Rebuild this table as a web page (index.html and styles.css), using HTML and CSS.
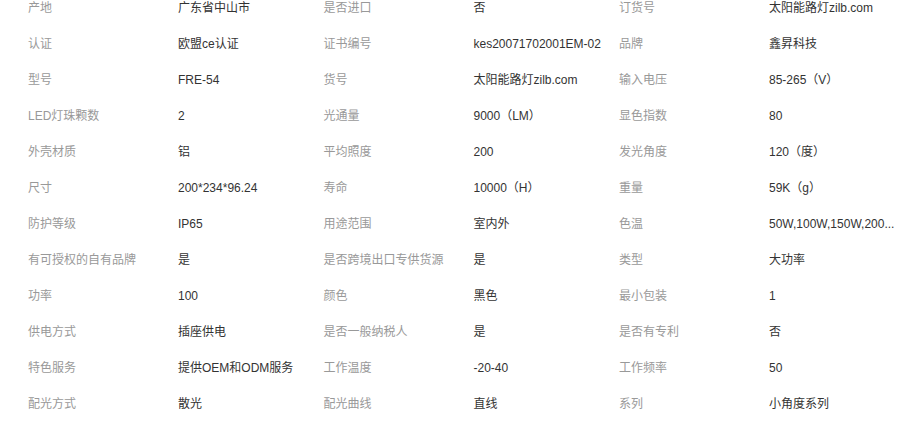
FILE: index.html
```html
<!DOCTYPE html>
<html lang="zh-CN">
<head>
    <meta charset="UTF-8">
    <meta name="viewport" content="width=device-width, initial-scale=1.0">
    <title>产品参数</title>
    <link rel="stylesheet" href="styles.css">
</head>
<body>
    <div class="params">
        <span class="key">产地</span><span class="val">广东省中山市</span>
        <span class="key">是否进口</span><span class="val">否</span>
        <span class="key">订货号</span><span class="val">太阳能路灯zilb.com</span>

        <span class="key">认证</span><span class="val">欧盟ce认证</span>
        <span class="key">证书编号</span><span class="val">kes20071702001EM-02</span>
        <span class="key">品牌</span><span class="val">鑫昇科技</span>

        <span class="key">型号</span><span class="val">FRE-54</span>
        <span class="key">货号</span><span class="val">太阳能路灯zilb.com</span>
        <span class="key">输入电压</span><span class="val">85-265（V）</span>

        <span class="key">LED灯珠颗数</span><span class="val">2</span>
        <span class="key">光通量</span><span class="val">9000（LM）</span>
        <span class="key">显色指数</span><span class="val">80</span>

        <span class="key">外壳材质</span><span class="val">铝</span>
        <span class="key">平均照度</span><span class="val">200</span>
        <span class="key">发光角度</span><span class="val">120（度）</span>

        <span class="key">尺寸</span><span class="val">200*234*96.24</span>
        <span class="key">寿命</span><span class="val">10000（H）</span>
        <span class="key">重量</span><span class="val">59K（g）</span>

        <span class="key">防护等级</span><span class="val">IP65</span>
        <span class="key">用途范围</span><span class="val">室内外</span>
        <span class="key">色温</span><span class="val">50W,100W,150W,200...</span>

        <span class="key">有可授权的自有品牌</span><span class="val">是</span>
        <span class="key">是否跨境出口专供货源</span><span class="val">是</span>
        <span class="key">类型</span><span class="val">大功率</span>

        <span class="key">功率</span><span class="val">100</span>
        <span class="key">颜色</span><span class="val">黑色</span>
        <span class="key">最小包装</span><span class="val">1</span>

        <span class="key">供电方式</span><span class="val">插座供电</span>
        <span class="key">是否一般纳税人</span><span class="val">是</span>
        <span class="key">是否有专利</span><span class="val">否</span>

        <span class="key">特色服务</span><span class="val">提供OEM和ODM服务</span>
        <span class="key">工作温度</span><span class="val">-20-40</span>
        <span class="key">工作频率</span><span class="val">50</span>

        <span class="key">配光方式</span><span class="val">散光</span>
        <span class="key">配光曲线</span><span class="val">直线</span>
        <span class="key">系列</span><span class="val">小角度系列</span>
    </div>
</body>
</html>
```

FILE: styles.css
```css
body {
    margin: 0;
    background-color: #fff;
    font-family: "Liberation Sans", "Noto Sans CJK SC", sans-serif;
    font-size: 12px;
}

.params {
    display: grid;
    grid-template-columns: repeat(3, 150px 145.5px);
}

.key,
.val {
    height: 36px;
    line-height: 36px;
    padding-left: 28px;
    white-space: nowrap;
}

/* первая строка обрезана сверху */
.key:nth-child(-n+6),
.val:nth-child(-n+6) {
    height: 26px;
    line-height: 16px;
}

.key {
    color: #999;
}

.val {
    color: #333;
}
```
